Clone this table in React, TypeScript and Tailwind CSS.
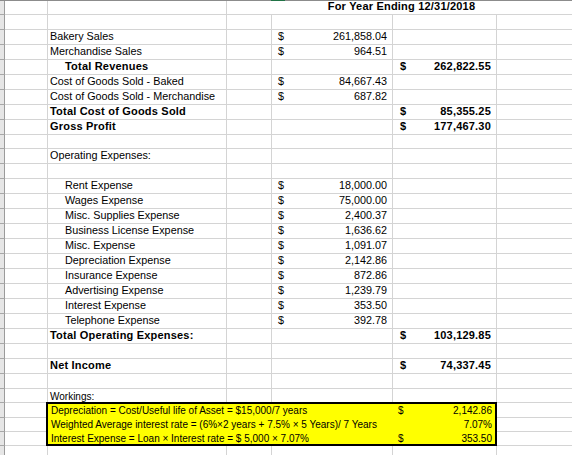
import React from 'react';

type R = {
  h?: 14 | 15;
  label?: string;
  indent?: boolean;
  bold?: boolean;
  d?: string;
  e?: string;
  thin?: boolean;
};

const rows: R[] = [
  {},
  { label: 'Bakery Sales', d: '261,858.04' },
  { label: 'Merchandise Sales', d: '964.51' },
  { label: 'Total Revenues', indent: true, bold: true, e: '262,822.55' },
  { label: 'Cost of Goods Sold - Baked', d: '84,667.43' },
  { label: 'Cost of Goods Sold - Merchandise', d: '687.82' },
  { label: 'Total Cost of Goods Sold', bold: true, e: '85,355.25' },
  { label: 'Gross Profit', bold: true, e: '177,467.30' },
  { h: 14 },
  { label: 'Operating Expenses:' },
  {},
  { label: 'Rent Expense', indent: true, d: '18,000.00' },
  { label: 'Wages Expense', indent: true, d: '75,000.00' },
  { label: 'Misc. Supplies Expense', indent: true, d: '2,400.37' },
  { label: 'Business License Expense', indent: true, d: '1,636.62' },
  { label: 'Misc. Expense', indent: true, d: '1,091.07' },
  { label: 'Depreciation Expense', indent: true, d: '2,142.86' },
  { label: 'Insurance Expense', indent: true, d: '872.86' },
  { label: 'Advertising Expense', indent: true, d: '1,239.79' },
  { label: 'Interest Expense', indent: true, d: '353.50' },
  { label: 'Telephone Expense', indent: true, d: '392.78' },
  { label: 'Total Operating Expenses:', bold: true, e: '103,129.85' },
  {},
  { label: 'Net Income', bold: true, e: '74,337.45' },
  {},
  { h: 14, label: 'Workings:', thin: true },
];

function Lead({ h }: { h?: 14 | 15 }) {
  return (
    <>
      <div className="w-[5px] shrink-0 bg-[#e6e6e6] border-r border-b border-r-[#9b9b9b] border-b-[#a8a8a8]" />
      <div className="w-[43px] shrink-0 border-r border-b border-[#d4d4d4]" />
    </>
  );
}

function Row({ r }: { r: R }) {
  const hc = r.h === 14 ? 'h-[14px]' : 'h-[15px]';
  const labelFont = r.bold
    ? 'font-bold text-[11px] tracking-[0.2px]'
    : r.thin
    ? 'text-[10px] pt-[1px]'
    : 'text-[10.8px]';
  return (
    <div className={`flex ${hc} shrink-0`}>
      <Lead h={r.h} />
      <div
        className={`w-[179px] shrink-0 border-r border-b border-[#d4d4d4] whitespace-nowrap leading-[13px] ${
          r.indent ? 'pl-[17px]' : 'pl-[2px]'
        } ${labelFont}`}
      >
        {r.label}
      </div>
      <div className="w-[45px] shrink-0 border-r border-b border-[#d4d4d4]" />
      <div className="w-[121px] shrink-0 border-r border-b border-[#d4d4d4] flex justify-between pl-[6px] pr-[5px] text-[10.8px] leading-[13px]">
        {r.d && (
          <>
            <span>$</span>
            <span>{r.d}</span>
          </>
        )}
      </div>
      <div className="w-[104px] shrink-0 border-r border-b border-[#d4d4d4] flex justify-between pl-[7px] pr-[5px] font-bold text-[11px] tracking-[0.2px] leading-[13px]">
        {r.e && (
          <>
            <span>$</span>
            <span>{r.e}</span>
          </>
        )}
      </div>
      <div className="w-[120px] shrink-0 border-b border-[#d4d4d4]" />
    </div>
  );
}

function PlainRow({ h }: { h: 14 | 15 }) {
  return <Row r={{ h }} />;
}

const yellowLines = [
  {
    label: 'Depreciation = Cost/Useful life of Asset = $15,000/7 years',
    dollar: true,
    v: '2,142.86',
  },
  {
    label: 'Weighted Average interest rate = (6%×2 years + 7.5% × 5 Years)/ 7 Years',
    dollar: false,
    v: '7.07%',
  },
  {
    label: 'Interest Expense = Loan × Interest rate = $ 5,000 × 7.07%',
    dollar: true,
    v: '353.50',
  },
];

export default function App() {
  return (
    <div className="w-[572px] h-[455px] overflow-hidden bg-white text-black font-['Liberation_Sans',Arial,sans-serif]">
      {/* top edge line */}
      <div className="flex h-[1px]">
        <div className="w-[271px] bg-[#8c8c8c]" />
        <div className="w-[14px] bg-[#217346]" />
        <div className="flex-1 bg-[#8c8c8c]" />
      </div>
      {/* title row */}
      <div className="flex h-[14px]">
        <Lead />
        <div className="w-[179px] shrink-0 border-r border-b border-[#d4d4d4]" />
        <div className="w-[349px] shrink-0 border-b border-[#d4d4d4] text-center font-bold text-[11px] tracking-[0.2px] leading-[11px] whitespace-nowrap">
          For Year Ending 12/31/2018
        </div>
      </div>
      {rows.map((r, i) => (
        <Row key={i} r={r} />
      ))}
      {/* workings block */}
      <div className="flex">
        <div className="flex flex-col shrink-0">
          <div className="flex h-[15px]">
            <Lead />
          </div>
          <div className="flex h-[14px]">
            <Lead />
          </div>
          <div className="flex h-[14px]">
            <Lead />
          </div>
        </div>
        <div className="-ml-[2px] -mt-px w-[451px] h-[44px] shrink-0 border-2 border-black bg-[#ffff00] flex flex-col text-[10px] leading-[14px] whitespace-nowrap pt-[0px]">
          {yellowLines.map((l, i) => (
            <div key={i} className={`flex ${i === 2 ? 'h-[12px]' : 'h-[14px]'}`}>
              <div className="w-[345px] shrink-0 pl-[3px]">{l.label}</div>
              <div className="flex-1 flex justify-between pl-[5px] pr-[3px]">
                <span>{l.dollar ? '$' : ''}</span>
                <span>{l.v}</span>
              </div>
            </div>
          ))}
        </div>
        <div className="flex flex-col shrink-0">
          <div className="w-[120px] h-[15px] border-b border-[#d4d4d4]" />
          <div className="w-[120px] h-[14px] border-b border-[#d4d4d4]" />
          <div className="w-[120px] h-[14px] border-b border-[#d4d4d4]" />
        </div>
      </div>
      <PlainRow h={15} />
      <PlainRow h={15} />
    </div>
  );
}
